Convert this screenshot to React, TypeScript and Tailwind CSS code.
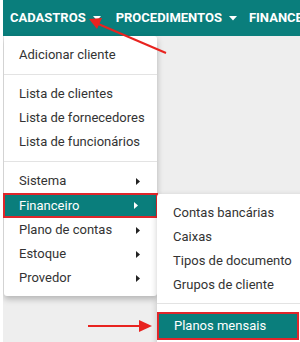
import { ReactNode } from "react";

const menuA = ["Lista de clientes", "Lista de fornecedores", "Lista de funcionários"];
const menuB = ["Sistema", "Financeiro", "Plano de contas", "Estoque", "Provedor"];
const subA = ["Contas bancárias", "Caixas", "Tipos de documento", "Grupos de cliente"];

function DownCaret() {
  return (
    <svg width="8" height="5" viewBox="0 0 8 5" className="ml-[7px]">
      <path d="M0 0h8L4 4.5z" fill="#fff" />
    </svg>
  );
}

function RightCaret({ color }: { color: string }) {
  return (
    <svg width="4" height="7" viewBox="0 0 4 7">
      <path d="M0 0l4 3.5L0 7z" fill={color} />
    </svg>
  );
}

function Item({ children, pl = "pl-[15px]" }: { children: ReactNode; pl?: string }) {
  return <div className={`flex h-6 items-center whitespace-nowrap pr-2 text-[#333] ${pl}`}>{children}</div>;
}

function Divider({ className = "" }: { className?: string }) {
  return <div className={`h-px bg-[#e3e3e3] ${className}`} />;
}

export default function App() {
  return (
    <div className="relative h-[342px] w-[300px] overflow-hidden border-l-[3px] border-white bg-[#eeeeee] font-['Roboto',sans-serif] text-[13px]">
      <nav className="flex h-9 items-center bg-[#0a7e7c] pl-[7px] text-[13px] font-bold text-white whitespace-nowrap">
        <span className="flex items-center">
          CADASTROS
          <DownCaret />
        </span>
        <span className="ml-[15px] flex items-center">
          PROCEDIMENTOS
          <DownCaret />
        </span>
        <span className="ml-[12px]">FINANCEIRO</span>
      </nav>

      {/* main dropdown */}
      <div className="absolute left-px top-9 w-[153px] rounded-b-[3px] rounded-tr-[3px] bg-white pt-[7px] pb-[6px] shadow-[0_3px_6px_rgba(0,0,0,0.25)]">
        <Item>Adicionar cliente</Item>
        <Divider className="my-[7px]" />
        {menuA.map((m) => (
          <Item key={m}>{m}</Item>
        ))}
        <Divider className="my-[7px]" />
        {menuB.map((m) =>
          m === "Financeiro" ? (
            <div
              key={m}
              className="relative -mx-px flex h-[25px] items-center justify-between border-2 border-[#e0262b] bg-[#0a7e7c] pl-[14px] pr-[18px] text-white"
            >
              {m}
              <RightCaret color="#fff" />
            </div>
          ) : (
            <div key={m} className="flex h-6 items-center justify-between pl-[15px] pr-[17px] text-[#333]">
              {m}
              <RightCaret color="#222" />
            </div>
          )
        )}
      </div>

      {/* submenu */}
      <div className="absolute left-[154px] top-[194px] h-[160px] w-[160px] rounded-tl-[3px] bg-white pt-[7px] shadow-[0_2px_6px_rgba(0,0,0,0.2)]">
        {subA.map((m) => (
          <Item key={m} pl="pl-4">
            {m}
          </Item>
        ))}
        <Divider className="mt-[6px] mb-2" />
        <div className="flex h-[28px] w-[142px] items-center border-2 border-[#e0262b] bg-[#0a7e7c] pl-[15px] text-white">
          Planos mensais
        </div>
      </div>

      {/* annotation arrows */}
      <svg className="pointer-events-none absolute left-[-3px] top-0" width="300" height="342" viewBox="0 0 300 342">
        <line x1="166" y1="53" x2="96" y2="23" stroke="#e8231f" strokeWidth="2" />
        <path d="M89 19l13-1-5 11z" fill="#e8231f" />
        <line x1="88" y1="326" x2="140" y2="326" stroke="#e8231f" strokeWidth="2" />
        <path d="M152 326l-13-6v12z" fill="#e8231f" />
      </svg>
    </div>
  );
}
